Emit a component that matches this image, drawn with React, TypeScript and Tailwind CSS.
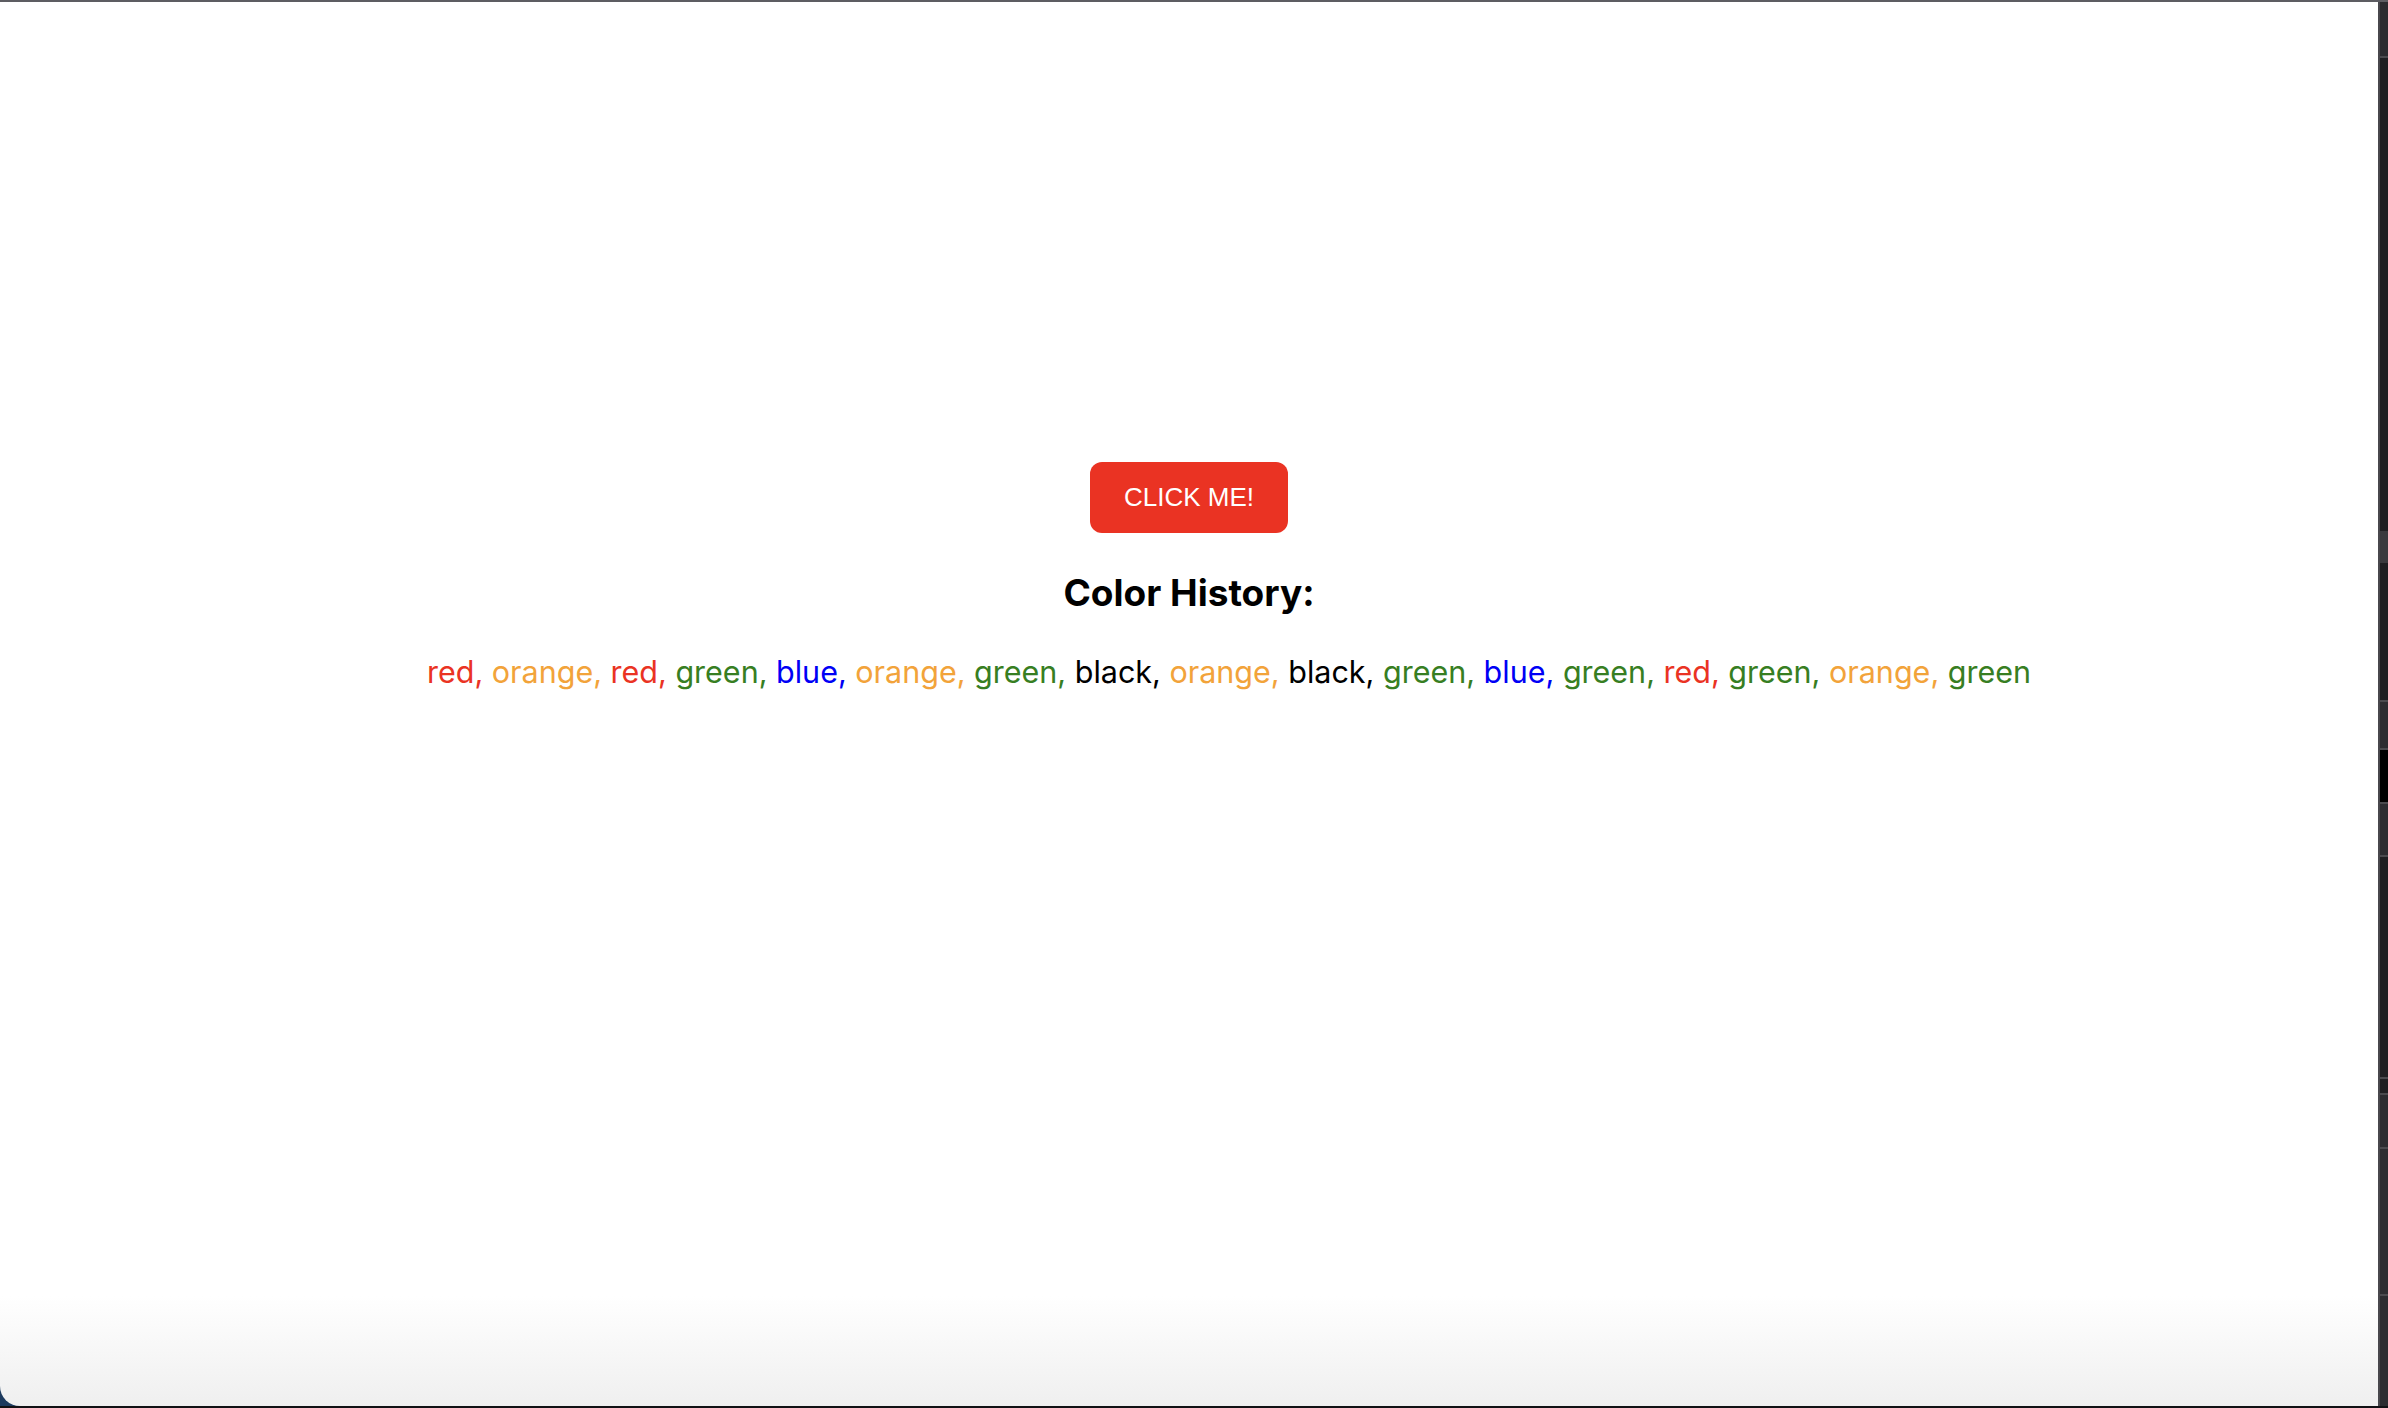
import { useState } from "react";

const COLORS: Record<string, string> = {
  red: "text-[#ea3323]",
  orange: "text-[#f2a33a]",
  green: "text-[#377e22]",
  blue: "text-[#0000f5]",
  black: "text-black",
};

const INITIAL = [
  "red",
  "orange",
  "red",
  "green",
  "blue",
  "orange",
  "green",
  "black",
  "orange",
  "black",
  "green",
  "blue",
  "green",
  "red",
  "green",
  "orange",
  "green",
];

export default function App() {
  const [history, setHistory] = useState<string[]>(INITIAL);

  const handleClick = () => {
    const names = Object.keys(COLORS);
    const next = names[Math.floor(Math.random() * names.length)];
    setHistory((h) => [...h, next]);
  };

  return (
    <div className="h-[1408px] w-full flex flex-col bg-[#1d1d20] overflow-hidden">
      {/* window top edge */}
      <div className="h-[2px] bg-[#5d5d62]" />

      <div className="flex flex-1 min-h-0">
        <div className="flex-1 flex bg-[#1c3a5e]">
          <main className="flex-1 rounded-bl-[20px] bg-[linear-gradient(to_bottom,#ffffff_calc(100%-110px),#efefef_100%)] flex flex-col items-center pt-[460px] font-['Inter',sans-serif]">
            <button
              onClick={handleClick}
              className="w-[198px] h-[71px] rounded-[12px] bg-[#ea3323] text-white text-[26px] font-['Liberation_Sans',Arial,sans-serif] flex items-center justify-center"
            >
              CLICK ME!
            </button>

            <h3 className="mt-[37px] text-[37px] leading-[45px] font-bold text-black">
              Color History:
            </h3>

            <div className="mt-[39px] pl-[80px] text-[30.5px] leading-[36px] text-center">
              {history.map((c, i) => (
                <span key={i} className={COLORS[c]}>
                  {c}
                  {i < history.length - 1 ? ", " : ""}
                </span>
              ))}
            </div>
          </main>
        </div>

        {/* side panel strip */}
        <aside className="w-[10px] flex flex-col border-l-2 border-[#48474c] bg-[#1f1f22]">
          <div className="h-[56px] shrink-0 bg-[#2b2b2f] border-b-2 border-[#4a4a4e]" />
          <div className="h-[473px] shrink-0" />
          <div className="h-[32px] shrink-0 bg-[#3a3a3e]" />
          <div className="h-[137px] shrink-0" />
          <div className="h-[50px] shrink-0 bg-[#2c2c30] border-y-2 border-[#4a4a4e]" />
          <div className="h-[52px] shrink-0 bg-black" />
          <div className="h-[55px] shrink-0 bg-[#2c2c30] border-y-2 border-[#4a4a4e]" />
          <div className="h-[220px] shrink-0" />
          <div className="h-[18px] shrink-0 border-y-2 border-[#4a4a4e]" />
          <div className="h-[54px] shrink-0 bg-[#2c2c30] border-b-2 border-[#4a4a4e]" />
          <div className="h-[147px] shrink-0 bg-[#2c2c30] border-b-2 border-[#4a4a4e]" />
          <div className="flex-1 bg-[#2c2c30]" />
        </aside>
      </div>

      {/* window bottom edge */}
      <div className="h-[2px] bg-[#111114]" />
    </div>
  );
}
